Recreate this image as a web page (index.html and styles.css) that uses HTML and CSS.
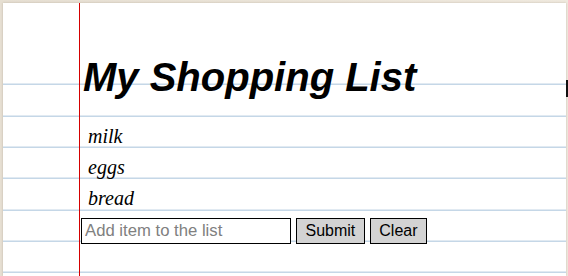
FILE: index.html
```html
<!DOCTYPE html>
<html>
<head>
<meta charset="utf-8">
<title>My Shopping List</title>
<link rel="stylesheet" href="styles.css">
</head>
<body>
<div class="paper">
  <span class="edge-mark"></span>
  <div class="content">
    <h1 class="title">My Shopping List</h1>
    <ul class="items">
      <li>milk</li>
      <li>eggs</li>
      <li>bread</li>
    </ul>
    <form class="add-form">
      <input class="add-input" type="text" placeholder="Add item to the list">
      <button class="btn" type="button">Submit</button>
      <button class="btn" type="button">Clear</button>
    </form>
  </div>
</div>
</body>
</html>
```
FILE: styles.css
```css
html, body {
  margin: 0;
  padding: 0;
  height: 100%;
  overflow: hidden;
}
body {
  background: linear-gradient(to right, #e6dfd2, #efe9de);
  padding: 3px 2px 0 3px;
  box-sizing: border-box;
}
.paper {
  position: relative;
  height: 100%;
  background:
    linear-gradient(#fff, #fff) no-repeat 0 0 / 100% 80px,
    repeating-linear-gradient(to bottom, #fff 0, #fff 30.33px, #a7c2da 30.33px, #a7c2da 31.33px) 0 50.67px;
  box-shadow: 0 0 2px rgba(120, 105, 80, 0.35);
}
.edge-mark {
  position: absolute;
  right: -2px;
  top: 77px;
  width: 2px;
  height: 17px;
  background: #111;
}
.content {
  margin-left: 76px;
  height: 100%;
  border-left: 1px solid #d40000;
  padding-top: 51px;
  box-sizing: border-box;
}
.title {
  margin: 0 0 0 3px;
  font-family: "Liberation Sans", Arial, sans-serif;
  font-weight: bold;
  font-style: italic;
  font-size: 40px;
  line-height: 46px;
  color: #000;
}
.items {
  list-style: none;
  margin: 20.6px 0 0 0;
  padding: 0 0 0 8px;
  font-family: "Liberation Serif", "Times New Roman", serif;
  font-style: italic;
  font-size: 20px;
  line-height: 31.33px;
  color: #000;
}
.add-form {
  display: flex;
  gap: 5px;
  margin: 3.4px 0 0 1px;
}
.add-input {
  box-sizing: border-box;
  width: 210px;
  height: 26px;
  margin: 0;
  padding: 0 3px;
  border: 1px solid #000;
  font-family: "Liberation Sans", Arial, sans-serif;
  font-size: 16.7px;
  background: #fff;
  outline: none;
}
.add-input::placeholder {
  color: #808080;
}
.btn {
  box-sizing: border-box;
  height: 26px;
  margin: 0;
  padding: 0 8.5px;
  border: 1px solid #000;
  background: #d3d3d3;
  font-family: "Liberation Sans", Arial, sans-serif;
  font-size: 16px;
  color: #000;
}
```
